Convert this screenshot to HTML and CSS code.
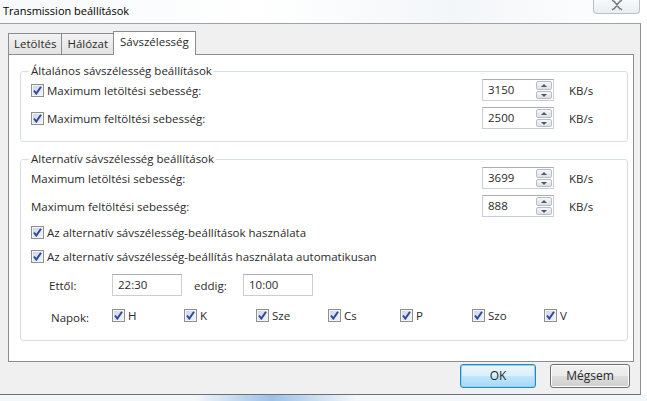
FILE: index.html
```html
<!DOCTYPE html>
<html lang="hu">

<head>
    <meta charset="UTF-8">
    <title>Transmission beállítások</title>
    <link rel="stylesheet" href="styles.css">
</head>

<body>
    <div class="window">
        <div class="titlebar">
            <span class="title">Transmission beállítások</span>
            <span class="close">
                <svg width="14" height="11" viewBox="0 0 14 11">
                    <path d="M2 0 L7 4 L12 0 M2 10 L7 6 L12 10 M4 1 L10 9 M10 1 L4 9" stroke="#7a7a7a" stroke-width="1.4" fill="none" />
                </svg>
            </span>
        </div>

        <div class="client">
            <div class="tabs">
                <span class="tab">Letöltés</span>
                <span class="tab">Hálózat</span>
                <span class="tab active">Sávszélesség</span>
            </div>

            <div class="panel">
                <fieldset class="group first">
                    <legend>Általános sávszélesség beállítások</legend>
                    <div class="row">
                        <label class="check"><span class="box"></span>Maximum letöltési sebesség:</label>
                        <div class="spin"><span class="value">3150</span><span class="arrows"><i class="up"></i><i class="down"></i></span></div>
                        <span class="unit">KB/s</span>
                    </div>
                    <div class="row">
                        <label class="check"><span class="box"></span>Maximum feltöltési sebesség:</label>
                        <div class="spin"><span class="value">2500</span><span class="arrows"><i class="up"></i><i class="down"></i></span></div>
                        <span class="unit">KB/s</span>
                    </div>
                </fieldset>

                <fieldset class="group second">
                    <legend>Alternatív sávszélesség beállítások</legend>
                    <div class="row">
                        <span class="plain">Maximum letöltési sebesség:</span>
                        <div class="spin"><span class="value">3699</span><span class="arrows"><i class="up"></i><i class="down"></i></span></div>
                        <span class="unit">KB/s</span>
                    </div>
                    <div class="row">
                        <span class="plain">Maximum feltöltési sebesség:</span>
                        <div class="spin"><span class="value">888</span><span class="arrows"><i class="up"></i><i class="down"></i></span></div>
                        <span class="unit">KB/s</span>
                    </div>
                    <label class="check line"><span class="box"></span>Az alternatív sávszélesség-beállítások használata</label>
                    <label class="check line"><span class="box"></span>Az alternatív sávszélesség-beállítás használata automatikusan</label>

                    <div class="times">
                        <span class="tlabel">Ettől:</span>
                        <span class="field">22:30</span>
                        <span class="tlabel short">eddig:</span>
                        <span class="field">10:00</span>
                    </div>

                    <div class="days">
                        <span class="tlabel">Napok:</span>
                        <label class="check day"><span class="box"></span>H</label>
                        <label class="check day"><span class="box"></span>K</label>
                        <label class="check day"><span class="box"></span>Sze</label>
                        <label class="check day"><span class="box"></span>Cs</label>
                        <label class="check day"><span class="box"></span>P</label>
                        <label class="check day"><span class="box"></span>Szo</label>
                        <label class="check day"><span class="box"></span>V</label>
                    </div>
                </fieldset>
            </div>

            <div class="buttons">
                <span class="btn default">OK</span>
                <span class="btn">Mégsem</span>
            </div>
        </div>
        <div class="bottom"></div>
    </div>
</body>

</html>
```

FILE: styles.css
```css
/* Dialog frame */
body {
    margin: 0;
    font-family: "Open Sans", "Noto Sans", sans-serif;
    font-size: 11.5px;
    color: #2a2a2a;
    background: #dfe8f0;
}

.window {
    width: 647px;
    height: 401px;
    display: flex;
    flex-direction: column;
    background: linear-gradient(90deg, #f6f8fa 0%, #ffffff 40%, #f3f6f9 70%, #ffffff 100%);
    overflow: hidden;
}

.titlebar {
    height: 23px;
    display: flex;
    justify-content: space-between;
    align-items: flex-start;
    padding: 0 7px 0 3px;
}

.title {
    margin-top: 3px;
    font-size: 11px;
    color: #000;
}

.close {
    width: 45px;
    height: 13px;
    border: 1px solid #b9c0c8;
    border-top: none;
    border-radius: 0 0 4px 4px;
    display: flex;
    justify-content: center;
    align-items: flex-start;
    background: linear-gradient(#f8f9fb, #e9edf1);
}

.client {
    margin-right: 6px;
    height: 370px;
    background: #f0f0f0;
    border-top: 1px solid #a0a4a8;
    border-right: 1px solid #8c8f93;
    border-bottom: 1px solid #6d7074;
    display: flex;
    flex-direction: column;
}

.bottom {
    flex: 1;
    background: linear-gradient(90deg, #f4f7fa 30%, #9cc1e6 42%, #f4f7fa 55%);
}

/* Tabs */
.tabs {
    display: flex;
    align-items: flex-end;
    height: 30px;
    padding-left: 8px;
}

.tab {
    height: 20px;
    line-height: 20px;
    padding: 0 5px;
    border: 1px solid #898c95;
    border-bottom: none;
    border-right: none;
    background: linear-gradient(#f2f2f2, #e3e3e3);
}

.tab.active {
    height: 23px;
    line-height: 20px;
    padding: 0 6px;
    background: #fff;
    border-right: 1px solid #898c95;
    margin-bottom: -1px;
    position: relative;
}

.panel {
    margin: 0 6px 0 8px;
    height: 297px;
    background: #fff;
    border: 1px solid #898c95;
    padding: 9px 5px 0 11px;
    display: flex;
    flex-direction: column;
    gap: 10px;
}

/* Group boxes */
.group {
    margin: 0;
    border: 1px solid #d5dfe5;
    border-radius: 3px;
    padding: 0 0 0 10px;
    display: flex;
    flex-direction: column;
}

.group legend {
    padding: 0 2px;
    margin-left: -2px;
    line-height: 14px;
}

.group.first {
    padding-bottom: 9px;
}

.group.second {
    padding-bottom: 13px;
}

.row {
    display: flex;
    align-items: center;
    height: 28px;
    flex: none;
}

.row:first-of-type {
    margin-top: -2px;
}

.plain {
    flex: 1;
}

.check {
    display: flex;
    align-items: center;
    flex: 1;
}

.box {
    width: 11px;
    height: 11px;
    border: 1px solid #8f8f8f;
    margin-right: 3px;
    background: url("data:image/svg+xml;utf8,<svg xmlns='http://www.w3.org/2000/svg' width='11' height='11'><path d='M2 5.5 L4.3 8.5 L9 1.8' stroke='%23304a9a' stroke-width='2' fill='none'/></svg>") no-repeat center, linear-gradient(135deg, #c8d4e8, #f4f6fa);
    box-shadow: inset 0 0 0 1px #f4f4f4;
}

.check.line {
    flex: none;
    height: 24px;
}

/* Spin boxes */
.spin {
    width: 70px;
    height: 20px;
    border: 1px solid #c9ced6;
    border-top-color: #abadb3;
    display: flex;
    margin-right: 15px;
}

.value {
    flex: 1;
    padding-left: 5px;
    line-height: 20px;
}

.arrows {
    width: 16px;
    display: flex;
    flex-direction: column;
    gap: 1px;
    padding: 1px 1px 1px 0;
}

.arrows i {
    flex: 1;
    border: 1px solid #b8bdc5;
    border-radius: 2px;
    background: linear-gradient(#f5f6f8, #dde1e6);
    position: relative;
}

.arrows i::after {
    content: "";
    position: absolute;
    left: 4px;
    top: 2px;
    border-left: 3px solid transparent;
    border-right: 3px solid transparent;
}

.arrows .up::after {
    border-bottom: 3px solid #4d5a6b;
}

.arrows .down::after {
    border-top: 3px solid #4d5a6b;
}

.unit {
    width: 58px;
}

/* Schedule */
.times {
    display: flex;
    align-items: center;
    height: 24px;
    margin-top: 5px;
    padding-left: 18px;
    flex: none;
}

.tlabel {
    width: 63px;
}

.tlabel.short {
    width: 49px;
    padding-left: 12px;
}

.field {
    width: 63px;
    height: 20px;
    line-height: 20px;
    border: 1px solid #c9ced6;
    border-top-color: #abadb3;
    padding-left: 5px;
}

.days {
    display: flex;
    align-items: center;
    height: 24px;
    margin-top: 6px;
    padding-left: 20px;
    flex: none;
}

.days .tlabel {
    width: 61px;
    padding-top: 4px;
}

.check.day {
    flex: none;
    width: 72px;
}

/* Dialog buttons */
.buttons {
    flex: 1;
    display: flex;
    justify-content: flex-end;
    align-items: center;
    gap: 14px;
    padding: 0 10px 5px 0;
}

.btn {
    width: 74px;
    height: 22px;
    line-height: 22px;
    text-align: center;
    border: 1px solid #707070;
    border-radius: 3px;
    background: linear-gradient(#f2f2f2 0%, #ebebeb 50%, #dddddd 51%, #cfcfcf 100%);
    box-shadow: inset 0 0 0 1px #fcfcfc;
    font-size: 12px;
}

.btn.default {
    border-color: #3c7fb1;
    background: linear-gradient(#eaf6fd 0%, #d9f0fc 50%, #bee6fd 51%, #a7d9f5 100%);
    box-shadow: inset 0 0 0 1px #7ed9fb;
}

.btn:last-child {
    width: 78px;
}
```
